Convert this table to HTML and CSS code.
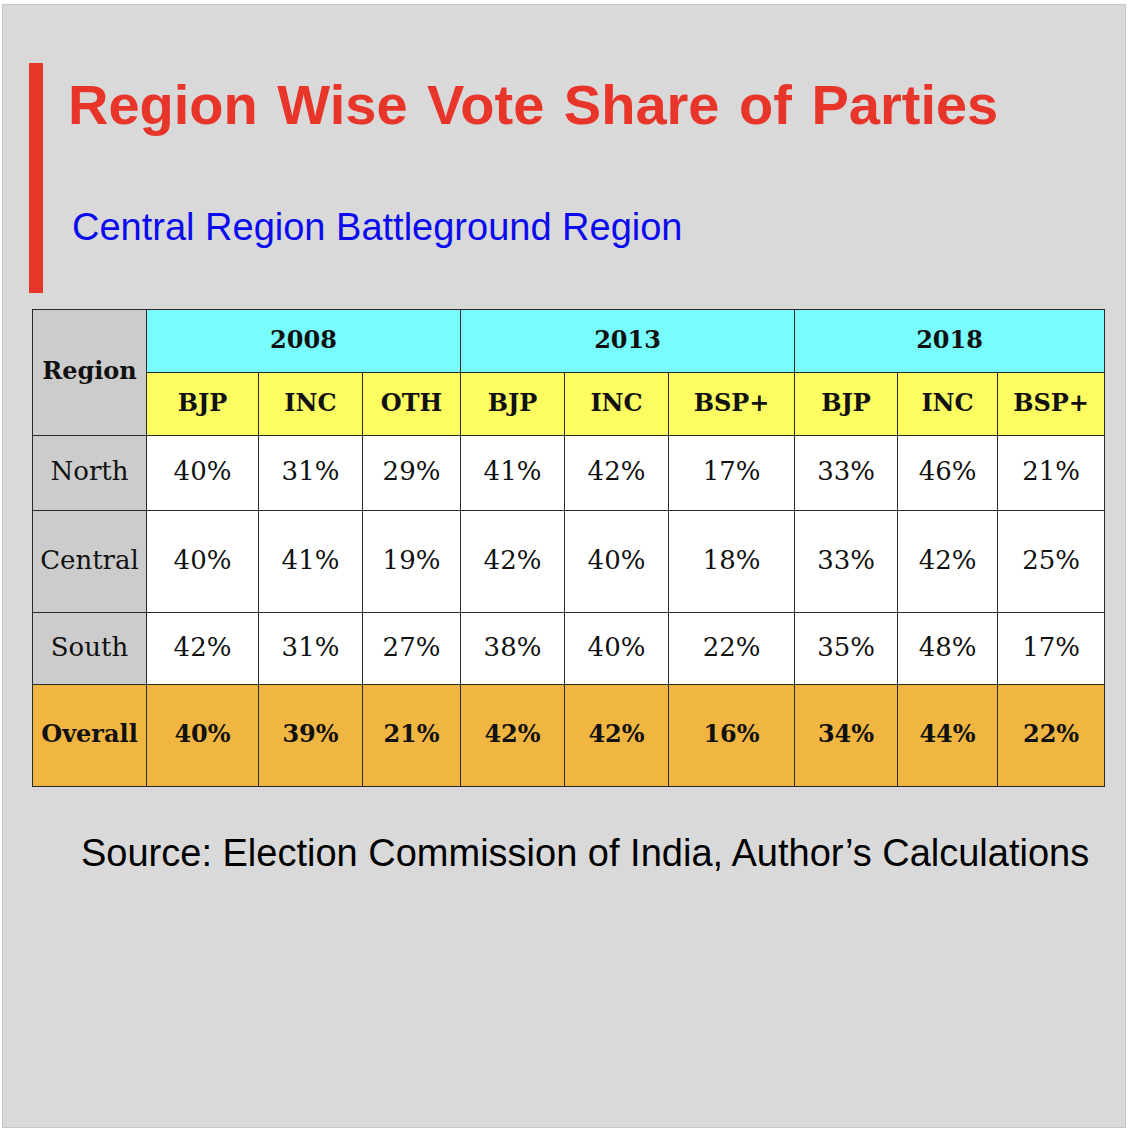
FILE: index.html
```html
<!DOCTYPE html>
<html>
<head>
<meta charset="utf-8">
<link rel="stylesheet" href="styles.css">
</head>
<body>
<div class="panel">
  <header class="head">
    <h1 class="title">Region Wise Vote Share of Parties</h1>
    <p class="subtitle">Central Region Battleground Region</p>
  </header>
  <table class="votes">
    <colgroup>
      <col class="c-region"><col class="c1"><col class="c2"><col class="c3"><col class="c4"><col class="c5"><col class="c6"><col class="c7"><col class="c8"><col class="c9">
    </colgroup>
    <thead>
      <tr class="r-year">
        <th rowspan="2" class="region-head">Region</th>
        <th colspan="3" class="year">2008</th>
        <th colspan="3" class="year">2013</th>
        <th colspan="3" class="year">2018</th>
      </tr>
      <tr class="r-party">
        <th class="party">BJP</th><th class="party">INC</th><th class="party">OTH</th>
        <th class="party">BJP</th><th class="party">INC</th><th class="party">BSP+</th>
        <th class="party">BJP</th><th class="party">INC</th><th class="party">BSP+</th>
      </tr>
    </thead>
    <tbody>
      <tr class="r-north">
        <th class="name">North</th>
        <td>40%</td><td>31%</td><td>29%</td><td>41%</td><td>42%</td><td>17%</td><td>33%</td><td>46%</td><td>21%</td>
      </tr>
      <tr class="r-central">
        <th class="name">Central</th>
        <td>40%</td><td>41%</td><td>19%</td><td>42%</td><td>40%</td><td>18%</td><td>33%</td><td>42%</td><td>25%</td>
      </tr>
      <tr class="r-south">
        <th class="name">South</th>
        <td>42%</td><td>31%</td><td>27%</td><td>38%</td><td>40%</td><td>22%</td><td>35%</td><td>48%</td><td>17%</td>
      </tr>
      <tr class="r-overall">
        <th>Overall</th>
        <td>40%</td><td>39%</td><td>21%</td><td>42%</td><td>42%</td><td>16%</td><td>34%</td><td>44%</td><td>22%</td>
      </tr>
    </tbody>
  </table>
  <p class="source">Source: Election Commission of India, Author’s Calculations</p>
</div>
</body>
</html>
```

FILE: styles.css
```css
html, body {
  margin: 0;
  padding: 0;
  background: #ffffff;
}

.panel {
  box-sizing: border-box;
  width: 1124px;
  height: 1124px;
  margin: 4px 0 0 2px;
  background: #d9d9d9;
  border: 1px solid #c6c6c6;
  display: flow-root;
}

.head {
  box-sizing: border-box;
  height: 230px;
  margin: 58px 0 0 26px;
  border-left: 14px solid #e8352a;
  padding: 14px 0 0 25px;
}

.title {
  margin: 0;
  font-family: "Liberation Sans", Arial, sans-serif;
  font-weight: 700;
  font-size: 56px;
  line-height: 56px;
  color: #e8352a;
  word-spacing: 4px;
}

.subtitle {
  margin: 75px 0 0 4px;
  font-family: "Liberation Sans", Arial, sans-serif;
  font-size: 38px;
  line-height: 38px;
  color: #0a0aee;
}

.votes {
  margin: 16px 0 0 29px;
  width: 1072px;
  table-layout: fixed;
  border-collapse: collapse;
  font-family: "DejaVu Serif", "Liberation Serif", serif;
  font-size: 26px;
  color: #111111;
}

.c-region { width: 114px; }
.c1 { width: 112px; }
.c2 { width: 104px; }
.c3 { width: 98px; }
.c4 { width: 104px; }
.c5 { width: 104px; }
.c6 { width: 126px; }
.c7 { width: 103px; }
.c8 { width: 100px; }
.c9 { width: 107px; }

.votes th,
.votes td {
  border: 1px solid #2a2a2a;
  padding: 0 0 4px 0;
  text-align: center;
  vertical-align: middle;
  background: #ffffff;
  white-space: nowrap;
}

.votes th {
  font-weight: 400;
}

.votes thead th {
  font-weight: 700;
  font-size: 24px;
}

.votes .region-head {
  background: #cccccc;
}

.votes .year {
  background: #78fcfd;
}

.votes .party {
  background: #fdfd61;
}

.votes .name {
  background: #cccccc;
}

.r-year { height: 63px; }
.r-party { height: 63px; }
.r-north { height: 75px; }
.r-central { height: 102px; }
.r-south { height: 72px; }
.r-overall { height: 102px; }

.votes .r-overall th,
.votes .r-overall td {
  background: #f1b642;
  font-weight: 700;
  font-size: 24px;
}

.source {
  margin: 47px 0 0 78px;
  font-family: "Liberation Sans", Arial, sans-serif;
  font-size: 38px;
  line-height: 38px;
  color: #000000;
}
```
